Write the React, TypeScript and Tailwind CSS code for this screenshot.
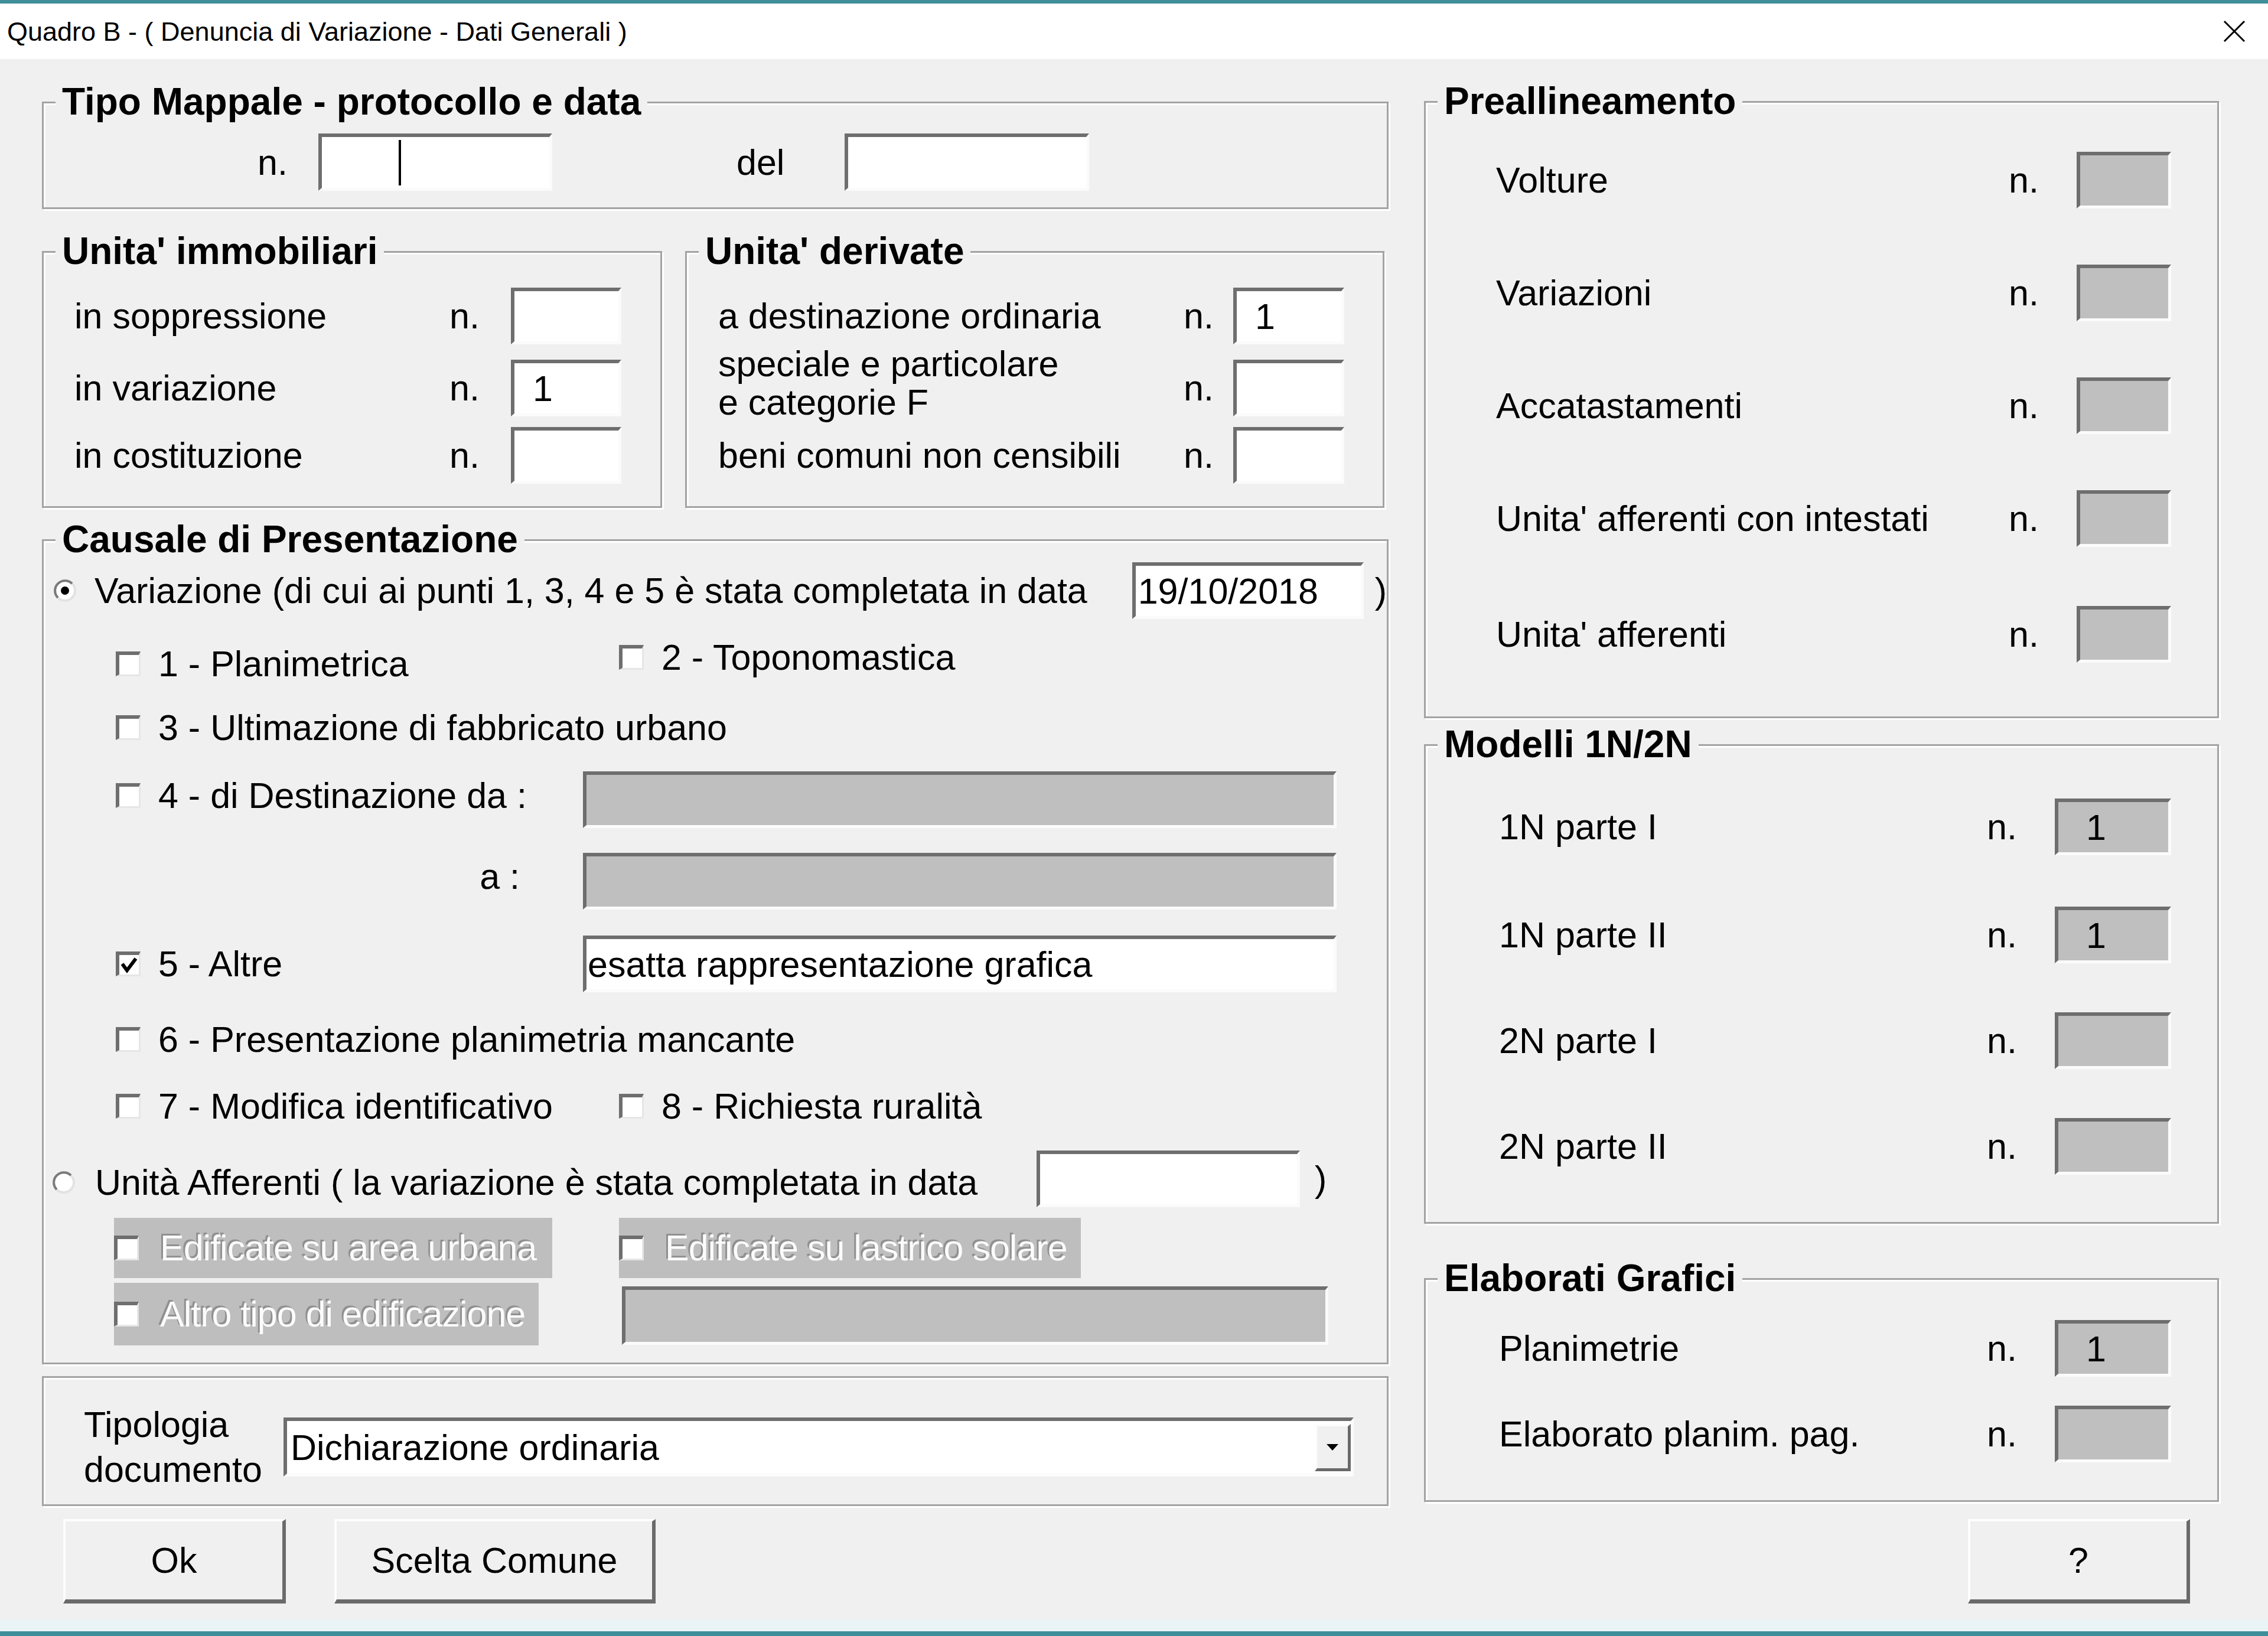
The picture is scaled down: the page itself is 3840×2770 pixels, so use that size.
import React from "react";

const sunken =
  "border-t-[6px] border-l-[6px] border-b-[5px] border-r-[5px] border-t-[#6e6e6e] border-l-[#6e6e6e] border-b-[#fbfbfb] border-r-[#fbfbfb]";
const raised =
  "border-t-[4px] border-l-[4px] border-b-[7px] border-r-[6px] border-t-[#fdfdfd] border-l-[#fdfdfd] border-b-[#6a6a6a] border-r-[#6a6a6a]";
const disabledText = "whitespace-nowrap tracking-[-1px] text-[#fbfbfb] [text-shadow:-3px_-3px_0_#909090]";

function Group({ title, className = "", children }: { title?: string; className?: string; children?: React.ReactNode }) {
  return (
    <div className={`flex shrink-0 flex-col border-[3px] border-[#a3a3a3] shadow-[inset_3px_3px_0_#ffffff,3px_3px_0_#ffffff] ${className}`}>
      {title && (
        <div className="-mt-[38px] ml-[20px] w-fit whitespace-nowrap bg-[#f0f0f0] px-[11px] text-[64px] font-bold leading-[70px]">
          {title}
        </div>
      )}
      {children}
    </div>
  );
}

function Field({ gray = false, className = "", children }: { gray?: boolean; className?: string; children?: React.ReactNode }) {
  return (
    <div className={`flex shrink-0 items-center overflow-hidden whitespace-nowrap ${sunken} ${gray ? "bg-[#bfbfbf]" : "bg-white"} ${className}`}>
      {children}
    </div>
  );
}

function Check({ checked = false }: { checked?: boolean }) {
  return (
    <div className="flex h-[42px] w-[42px] shrink-0 items-center justify-center border-t-[6px] border-l-[6px] border-b-[3px] border-r-[3px] border-t-[#6e6e6e] border-l-[#6e6e6e] border-b-[#e6e6e6] border-r-[#e6e6e6] bg-white">
      {checked && (
        <svg width="30" height="30" viewBox="0 0 30 30">
          <polyline points="3,13 11,24 26,4" fill="none" stroke="#000" strokeWidth="6" />
        </svg>
      )}
    </div>
  );
}

function Radio({ checked = false, className = "" }: { checked?: boolean; className?: string }) {
  return (
    <svg width="40" height="40" viewBox="0 0 40 40" className={`shrink-0 ${className}`}>
      <circle cx="20" cy="20" r="17" fill="#ffffff" stroke="#e2e2e2" strokeWidth="4" />
      <path d="M 7.98 32.02 A 17 17 0 0 1 32.02 7.98" fill="none" stroke="#7a7a7a" strokeWidth="4" />
      {checked && <circle cx="20" cy="20" r="7" fill="#000" />}
    </svg>
  );
}

function CheckLabel({ label, checked = false, className = "" }: { label: string; checked?: boolean; className?: string }) {
  return (
    <div className={`flex items-center ${className}`}>
      <Check checked={checked} />
      <span className="ml-[30px] whitespace-nowrap">{label}</span>
    </div>
  );
}

interface NumRowProps {
  label: React.ReactNode;
  value?: string;
  className?: string;
  pl: string;
  labelW: string;
  nW: string;
  fieldW: string;
  valuePl?: string;
  gray?: boolean;
}

function NumRow({ label, value, className = "", pl, labelW, nW, fieldW, valuePl = "pl-[31px]", gray = false }: NumRowProps) {
  return (
    <div className={`flex h-[96px] items-center ${pl} ${className}`}>
      <span className={`whitespace-nowrap ${labelW}`}>{label}</span>
      <span className={nW}>n.</span>
      <Field gray={gray} className={`h-[96px] ${fieldW}`}>
        {value && <span className={valuePl}>{value}</span>}
      </Field>
    </div>
  );
}

export default function App() {
  return (
    <div className="flex h-[2770px] w-[3840px] flex-col overflow-hidden bg-[#f0f0f0] font-['Liberation_Sans',Arial,sans-serif] text-[61px] leading-[70px] text-black">
      {/* title bar */}
      <div className="flex h-[100px] shrink-0 items-center justify-between border-t-[6px] border-t-[#3f8f9a] bg-white pl-[12px] pr-[37px]">
        <span className="whitespace-nowrap text-[45px] leading-none">Quadro B - ( Denuncia di Variazione - Dati Generali )</span>
        <svg width="40" height="40" viewBox="0 0 40 40">
          <path d="M3 3 L37 37 M37 3 L3 37" stroke="#000" strokeWidth="3" />
        </svg>
      </div>

      <div className="flex flex-1 pl-[71px]">
        {/* left column */}
        <div className="flex w-[2280px] flex-col">
          <Group title="Tipo Mappale - protocollo e data" className="mt-[72px] h-[182px]">
            <div className="mt-[19px] flex h-[97px] items-center">
              <span className="ml-[362px] w-[103px]">n.</span>
              <Field className="h-[97px] w-[396px]">
                <span className="ml-[130px] h-[77px] w-[4px] bg-black" />
              </Field>
              <span className="ml-[312px] w-[183px]">del</span>
              <Field className="h-[97px] w-[414px]" />
            </div>
          </Group>

          <div className="mt-[71px] flex h-[435px]">
            <Group title="Unita' immobiliari" className="h-[435px] w-[1050px]">
              <NumRow label="in soppressione" className="mt-[27px]" pl="pl-[52px]" labelW="w-[635px]" nW="w-[104px]" fieldW="w-[187px]" />
              <NumRow label="in variazione" value="1" className="mt-[26px]" pl="pl-[52px]" labelW="w-[635px]" nW="w-[104px]" fieldW="w-[187px]" />
              <NumRow label="in costituzione" className="mt-[18px]" pl="pl-[52px]" labelW="w-[635px]" nW="w-[104px]" fieldW="w-[187px]" />
            </Group>
            <Group title="Unita' derivate" className="ml-[39px] h-[435px] w-[1184px]">
              <NumRow label="a destinazione ordinaria" value="1" className="mt-[27px]" pl="pl-[53px]" labelW="w-[788px]" nW="w-[84px]" fieldW="w-[188px]" />
              <NumRow
                label={
                  <span className="mb-[16px] block leading-[65px]">
                    speciale e particolare
                    <br />e categorie F
                  </span>
                }
                className="mt-[26px]"
                pl="pl-[53px]"
                labelW="w-[788px]"
                nW="w-[84px]"
                fieldW="w-[188px]"
              />
              <NumRow label="beni comuni non censibili" className="mt-[18px]" pl="pl-[53px]" labelW="w-[788px]" nW="w-[84px]" fieldW="w-[188px]" />
            </Group>
          </div>

          <Group title="Causale di Presentazione" className="mt-[53px] h-[1397px]">
            <div className="mt-[4px] flex h-[96px] items-center">
              <Radio checked className="ml-[16px]" />
              <span className="ml-[30px] w-[1759px] whitespace-nowrap">Variazione (di cui ai punti 1, 3, 4 e 5 è stata completata in data</span>
              <Field className="h-[96px] w-[392px]">
                <span className="pl-[4px]">19/10/2018</span>
              </Field>
              <span className="ml-[19px]">)</span>
            </div>

            <div className="mt-[46px] flex h-[60px] items-center">
              <CheckLabel label="1 - Planimetrica" className="ml-[122px] w-[852px]" />
              <CheckLabel label="2 - Toponomastica" className="mb-[22px]" />
            </div>

            <div className="mt-[48px] flex h-[60px] items-center">
              <CheckLabel label="3 - Ultimazione di fabbricato urbano" className="ml-[122px]" />
            </div>

            <div className="mt-[44px] flex h-[96px] items-center">
              <CheckLabel label="4 - di Destinazione da :" className="mb-[14px] ml-[122px] w-[791px]" />
              <Field gray className="h-[96px] w-[1276px]" />
            </div>

            <div className="mt-[42px] flex h-[96px] items-center">
              <span className="mb-[16px] ml-[122px] w-[791px] pr-[107px] text-right">a :</span>
              <Field gray className="h-[96px] w-[1276px]" />
            </div>

            <div className="mt-[44px] flex h-[96px] items-center">
              <CheckLabel label="5 - Altre" checked className="ml-[122px] w-[791px]" />
              <Field className="h-[96px] w-[1276px]">
                <span className="pl-[2px]">esatta rappresentazione grafica</span>
              </Field>
            </div>

            <div className="mt-[50px] flex h-[60px] items-center">
              <CheckLabel label="6 - Presentazione planimetria mancante" className="ml-[122px]" />
            </div>

            <div className="mt-[53px] flex h-[60px] items-center">
              <CheckLabel label="7 - Modifica identificativo" className="ml-[122px] w-[852px]" />
              <CheckLabel label="8 - Richiesta ruralità" />
            </div>

            <div className="mt-[45px] flex h-[96px] items-center">
              <Radio className="ml-[14px] mt-[12px]" />
              <span className="ml-[33px] mt-[12px] w-[1594px] whitespace-nowrap">Unità Afferenti ( la variazione è stata completata in data</span>
              <Field className="h-[96px] w-[446px]" />
              <span className="ml-[25px]">)</span>
            </div>

            <div className="mt-[18px] flex h-[102px]">
              <div className="ml-[119px] flex w-[742px] items-center overflow-hidden bg-[#bebebe]">
                <Check />
                <span className={`ml-[36px] ${disabledText}`}>Edificate su area urbana</span>
              </div>
              <div className="ml-[113px] flex w-[782px] items-center overflow-hidden bg-[#bebebe]">
                <Check />
                <span className={`ml-[36px] ${disabledText}`}>Edificate su lastrico solare</span>
              </div>
            </div>

            <div className="mt-[8px] flex h-[106px] items-start">
              <div className="ml-[119px] flex h-[106px] w-[719px] items-center overflow-hidden bg-[#bebebe]">
                <Check />
                <span className={`ml-[36px] ${disabledText}`}>Altro tipo di edificazione</span>
              </div>
              <Field gray className="ml-[141px] mt-[6px] h-[99px] w-[1196px]" />
            </div>
          </Group>

          <Group className="mt-[20px] h-[220px]">
            <div className="mt-[41px] flex h-[152px] items-center">
              <span className="ml-[68px] w-[338px] leading-[76px]">
                Tipologia
                <br />
                documento
              </span>
              <Field className="h-[100px] w-[1812px]">
                <span className="pl-[6px]">Dichiarazione ordinaria</span>
                <div className="ml-auto flex h-[80px] w-[61px] items-center justify-center border-t-[4px] border-l-[4px] border-b-[5px] border-r-[5px] border-t-[#fdfdfd] border-l-[#fdfdfd] border-b-[#6a6a6a] border-r-[#6a6a6a] bg-[#f0f0f0]">
                  <svg width="20" height="11" viewBox="0 0 20 11">
                    <polygon points="0,0 20,0 10,11" fill="#000" />
                  </svg>
                </div>
              </Field>
            </div>
          </Group>

          <div className="mt-[22px] flex h-[143px]">
            <button className={`ml-[36px] h-[143px] w-[377px] bg-[#f0f0f0] ${raised}`}>Ok</button>
            <button className={`ml-[82px] h-[143px] w-[544px] bg-[#f0f0f0] ${raised}`}>Scelta Comune</button>
          </div>
        </div>

        {/* right column */}
        <div className="ml-[60px] flex w-[1346px] flex-col">
          <Group title="Preallineamento" className="mt-[71px] h-[1045px]">
            <NumRow gray label="Volture" className="mt-[51px]" pl="pl-[119px]" labelW="w-[868px]" nW="w-[115px]" fieldW="w-[160px]" />
            <NumRow gray label="Variazioni" className="mt-[95px]" pl="pl-[119px]" labelW="w-[868px]" nW="w-[115px]" fieldW="w-[160px]" />
            <NumRow gray label="Accatastamenti" className="mt-[95px]" pl="pl-[119px]" labelW="w-[868px]" nW="w-[115px]" fieldW="w-[160px]" />
            <NumRow gray label="Unita' afferenti con intestati" className="mt-[95px]" pl="pl-[119px]" labelW="w-[868px]" nW="w-[115px]" fieldW="w-[160px]" />
            <NumRow gray label="Unita' afferenti" className="mt-[100px]" pl="pl-[119px]" labelW="w-[868px]" nW="w-[115px]" fieldW="w-[160px]" />
          </Group>

          <Group title="Modelli 1N/2N" className="mt-[44px] h-[812px]">
            <NumRow gray label="1N parte I" value="1" valuePl="pl-[47px]" className="mt-[57px]" pl="pl-[124px]" labelW="w-[826px]" nW="w-[115px]" fieldW="w-[197px]" />
            <NumRow gray label="1N parte II" value="1" valuePl="pl-[47px]" className="mt-[87px]" pl="pl-[124px]" labelW="w-[826px]" nW="w-[115px]" fieldW="w-[197px]" />
            <NumRow gray label="2N parte I" className="mt-[83px]" pl="pl-[124px]" labelW="w-[826px]" nW="w-[115px]" fieldW="w-[197px]" />
            <NumRow gray label="2N parte II" className="mt-[83px]" pl="pl-[124px]" labelW="w-[826px]" nW="w-[115px]" fieldW="w-[197px]" />
          </Group>

          <Group title="Elaborati Grafici" className="mt-[92px] h-[379px]">
            <NumRow gray label="Planimetrie" value="1" valuePl="pl-[47px]" className="mt-[36px]" pl="pl-[124px]" labelW="w-[826px]" nW="w-[115px]" fieldW="w-[197px]" />
            <NumRow gray label="Elaborato planim. pag." className="mt-[49px]" pl="pl-[124px]" labelW="w-[826px]" nW="w-[115px]" fieldW="w-[197px]" />
          </Group>

          <button className={`ml-[921px] mt-[29px] h-[143px] w-[376px] shrink-0 bg-[#f0f0f0] ${raised}`}>?</button>
        </div>
      </div>

      <div className="h-[20px] shrink-0 bg-[#eaf4f6]" />
      <div className="h-[8px] shrink-0 bg-[#3f8f9a]" />
    </div>
  );
}
